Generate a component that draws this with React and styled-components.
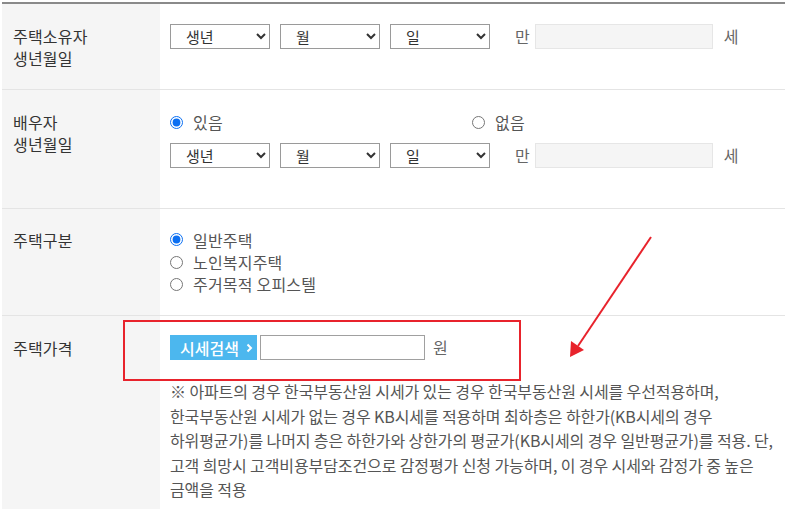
import React from "react";
import styled, { createGlobalStyle } from "styled-components";

const Global = createGlobalStyle`
  html, body { margin: 0; padding: 0; background: #fff; }
  body {
    font-family: "Noto Sans CJK KR", "Noto Sans", sans-serif;
    color: #333;
    overflow: hidden;
  }
`;

const Page = styled.div`
  position: relative;
  padding: 2px 0 0 2px;
  height: 507px;
  overflow: hidden;
`;

const Table = styled.div`
  border-top: 2px solid #8a8a8a;
`;

const Row = styled.div`
  display: grid;
  grid-template-columns: 158px 1fr;
  border-bottom: 1px solid #e4e4e4;
`;

const Label = styled.div`
  background: #f5f5f5;
  padding: ${(p) => p.$top || 21}px 11px 10px;
  font-size: 16px;
  line-height: 22px;
  letter-spacing: 0.2px;
  color: #333;
`;

const Cell = styled.div`
  padding: ${(p) => p.$pad || "20px 0 20px 10px"};
  font-size: 16px;
  color: #555;
`;

const Line = styled.div`
  display: flex;
  align-items: center;
  height: 25px;
  margin-top: ${(p) => p.$mt || 0}px;
`;

const Select = styled.select`
  width: 100px;
  height: 25px;
  margin: 0 10px 0 0;
  padding: 0 0 0 11px;
  border: 1px solid #9a9a9a;
  border-radius: 0;
  background: #fff;
  font-family: inherit;
  font-size: 15px;
  color: #333;
  &:last-of-type { margin-right: 0; }
`;

const Unit = styled.span`
  font-size: 16px;
  line-height: 25px;
  color: #666;
  margin: ${(p) => p.$m || "0"};
`;

const AgeBox = styled.input`
  width: 178px;
  height: 25px;
  box-sizing: border-box;
  border: 1px solid #e6e6e6;
  background: #f5f5f5;
  padding: 0;
  margin: 0;
`;

const RadioRow = styled.div`
  display: grid;
  grid-template-columns: 302px auto;
`;

const RadioLabel = styled.label`
  display: flex;
  align-items: center;
  height: ${(p) => p.$h || 22}px;
  font-size: 16px;
  letter-spacing: 0.2px;
  color: #555;
  input {
    width: 13px;
    height: 13px;
    margin: 0 10px 0 0;
    accent-color: #0b6ff2;
  }
`;

const SearchBtn = styled.button`
  display: flex;
  align-items: center;
  gap: 7px;
  width: 87px;
  height: 25px;
  padding: 0 0 0 10px;
  border: none;
  background: #4cb7ee;
  color: #fff;
  font-family: inherit;
  font-size: 16px;
  font-weight: 500;
  cursor: pointer;
`;

const PriceBox = styled.input`
  width: 165px;
  height: 25px;
  box-sizing: border-box;
  margin: 0 0 0 3px;
  border: 1px solid #a0a0a0;
  padding: 0;
`;

const Note = styled.p`
  margin: 19px 0 0;
  font-size: 16px;
  line-height: 24.5px;
  letter-spacing: -0.1px;
  word-break: keep-all;
  color: #555;
  padding-right: 0;
`;

const RedBox = styled.div`
  position: absolute;
  left: 123px;
  top: 320px;
  width: 398px;
  height: 61px;
  box-sizing: border-box;
  border: 2px solid #e8232c;
  pointer-events: none;
`;

const Arrow = styled.svg`
  position: absolute;
  left: 0;
  top: 0;
  pointer-events: none;
`;

function DateSelects() {
  return (
    <>
      <Select defaultValue="y">
        <option value="y">생년</option>
      </Select>
      <Select defaultValue="m">
        <option value="m">월</option>
      </Select>
      <Select defaultValue="d">
        <option value="d">일</option>
      </Select>
      <Unit $m="0 5px 0 25px">만</Unit>
      <AgeBox readOnly />
      <Unit $m="0 0 0 11px">세</Unit>
    </>
  );
}

export default function App() {
  return (
    <Page>
      <Global />
      <Table>
        <Row>
          <Label>
            주택소유자
            <br />
            생년월일
          </Label>
          <Cell $pad="20px 0 40px 10px">
            <Line>
              <DateSelects />
            </Line>
          </Cell>
        </Row>
        <Row>
          <Label>
            배우자
            <br />
            생년월일
          </Label>
          <Cell $pad="21px 0 40px 10px">
            <RadioRow>
              <RadioLabel>
                <input type="radio" name="spouse" defaultChecked />
                있음
              </RadioLabel>
              <RadioLabel>
                <input type="radio" name="spouse" />
                없음
              </RadioLabel>
            </RadioRow>
            <Line $mt={10}>
              <DateSelects />
            </Line>
          </Cell>
        </Row>
        <Row>
          <Label $top={20}>주택구분</Label>
          <Cell $pad="19px 0 20px 10px">
            <RadioLabel $h={23}>
              <input type="radio" name="house" defaultChecked />
              일반주택
            </RadioLabel>
            <RadioLabel $h={22}>
              <input type="radio" name="house" />
              노인복지주택
            </RadioLabel>
            <RadioLabel $h={22}>
              <input type="radio" name="house" />
              주거목적 오피스텔
            </RadioLabel>
          </Cell>
        </Row>
        <Row>
          <Label $top={21}>주택가격</Label>
          <Cell $pad="19px 0 20px 10px">
            <Line>
              <SearchBtn>
                시세검색
                <svg width="7" height="10" viewBox="0 0 7 10">
                  <path d="M1.5 1.5 L5 5 L1.5 8.5" fill="none" stroke="#fff" strokeWidth="2" />
                </svg>
              </SearchBtn>
              <PriceBox />
              <Unit $m="0 0 0 8px">원</Unit>
            </Line>
            <Note>
              ※ 아파트의 경우 한국부동산원 시세가 있는 경우 한국부동산원 시세를 우선적용하며, 한국부동산원 시세가 없는 경우 KB시세를 적용하며 최하층은 하한가(KB시세의 경우 하위평균가)를 나머지 층은 하한가와 상한가의 평균가(KB시세의 경우 일반평균가)를 적용. 단, 고객 희망시 고객비용부담조건으로 감정평가 신청 가능하며, 이 경우 시세와 감정가 중 높은 금액을 적용
            </Note>
          </Cell>
        </Row>
      </Table>
      <RedBox />
      <Arrow width="785" height="509" viewBox="0 0 785 509">
        <line x1="651" y1="237" x2="578" y2="346" stroke="#e8232c" strokeWidth="2" />
        <polygon points="570,357 571,341 584,350" fill="#e8232c" />
      </Arrow>
    </Page>
  );
}
